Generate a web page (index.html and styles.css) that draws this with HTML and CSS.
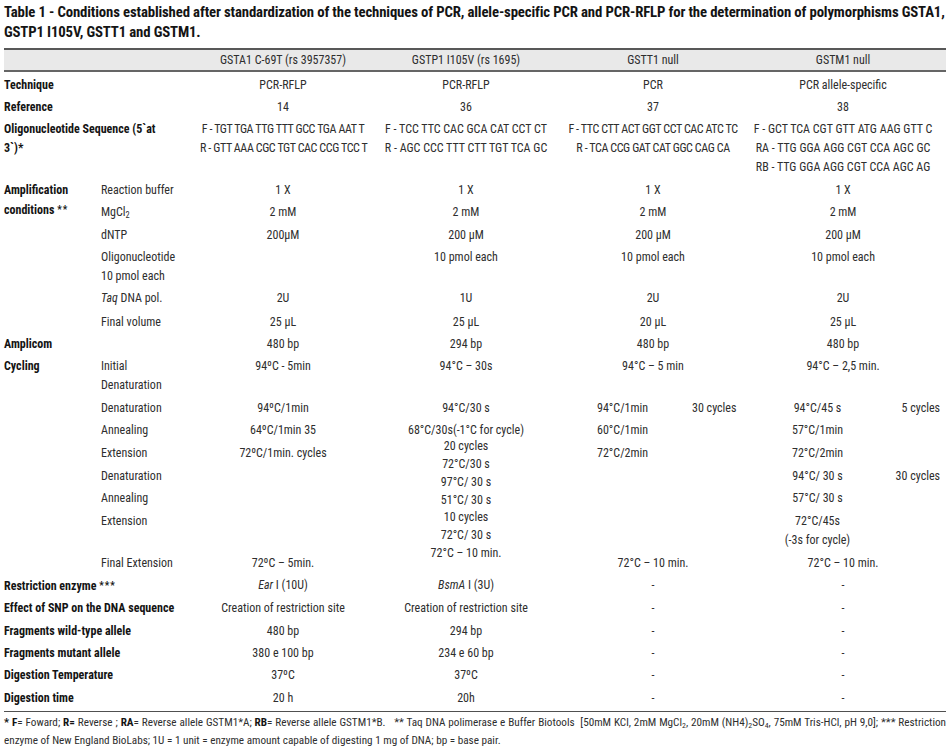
FILE: index.html
```html
<!DOCTYPE html>
<html lang="en">
<head>
<meta charset="utf-8">
<title>Table 1</title>
<link rel="stylesheet" href="styles.css">
</head>
<body>
<p class="title">Table 1 - Conditions established after standardization of the techniques of PCR, allele-specific PCR and PCR-RFLP for the determination of polymorphisms GSTA1,<br>GSTP1 I105V, GSTT1 and GSTM1.</p>
<table class="data">
  <colgroup>
    <col class="w-c1"><col class="w-c2"><col class="w-c3"><col class="w-c4">
    <col class="w-c5a"><col class="w-c5b"><col class="w-c6a"><col class="w-c6b">
  </colgroup>
  <thead>
    <tr>
      <th colspan="2"></th>
      <th>GSTA1 C-69T (rs 3957357)</th>
      <th>GSTP1 I105V (rs 1695)</th>
      <th colspan="2">GSTT1 null</th>
      <th colspan="2">GSTM1 null</th>
    </tr>
  </thead>
  <tbody>
    <tr class="first">
      <td colspan="2" class="lab">Technique</td>
      <td class="c">PCR-RFLP</td>
      <td class="c">PCR-RFLP</td>
      <td colspan="2" class="c">PCR</td>
      <td colspan="2" class="c">PCR allele-specific</td>
    </tr>
    <tr>
      <td colspan="2" class="lab">Reference</td>
      <td class="c">14</td>
      <td class="c">36</td>
      <td colspan="2" class="c">37</td>
      <td colspan="2" class="c">38</td>
    </tr>
    <tr>
      <td colspan="2" class="lab">Oligonucleotide Sequence (5`at<br>3`)*</td>
      <td class="c seq-tight">F - TGT TGA TTG TTT GCC TGA AAT T<br>R - GTT AAA CGC TGT CAC CCG TCC T</td>
      <td class="c">F - TCC TTC CAC GCA CAT CCT CT<br>R - AGC CCC TTT CTT TGT TCA GC</td>
      <td colspan="2" class="c seq-tight">F - TTC CTT ACT GGT CCT CAC ATC TC<br>R - TCA CCG GAT CAT GGC CAG CA</td>
      <td colspan="2" class="c">F - GCT TCA CGT GTT ATG AAG GTT C<br>RA - TTG GGA AGG CGT CCA AGC GC<br>RB - TTG GGA AGG CGT CCA AGC AG</td>
    </tr>
    <tr>
      <td rowspan="6" class="lab">Amplification<br>conditions <span class="ast">**</span></td>
      <td class="sub">Reaction buffer</td>
      <td class="c">1 X</td>
      <td class="c">1 X</td>
      <td colspan="2" class="c">1 X</td>
      <td colspan="2" class="c">1 X</td>
    </tr>
    <tr>
      <td class="sub">MgCl<sub>2</sub></td>
      <td class="c">2 mM</td>
      <td class="c">2 mM</td>
      <td colspan="2" class="c">2 mM</td>
      <td colspan="2" class="c">2 mM</td>
    </tr>
    <tr>
      <td class="sub">dNTP</td>
      <td class="c">200µM</td>
      <td class="c">200 µM</td>
      <td colspan="2" class="c">200 µM</td>
      <td colspan="2" class="c">200 µM</td>
    </tr>
    <tr>
      <td class="sub">Oligonucleotide<br>10 pmol each</td>
      <td class="c"></td>
      <td class="c">10 pmol each</td>
      <td colspan="2" class="c">10 pmol each</td>
      <td colspan="2" class="c">10 pmol each</td>
    </tr>
    <tr>
      <td class="sub"><i>Taq</i> DNA pol.</td>
      <td class="c">2U</td>
      <td class="c">1U</td>
      <td colspan="2" class="c">2U</td>
      <td colspan="2" class="c">2U</td>
    </tr>
    <tr class="bump">
      <td class="sub">Final volume</td>
      <td class="c">25 µL</td>
      <td class="c">25 µL</td>
      <td colspan="2" class="c">20 µL</td>
      <td colspan="2" class="c">25 µL</td>
    </tr>
    <tr>
      <td colspan="2" class="lab">Amplicom</td>
      <td class="c">480 bp</td>
      <td class="c">294 bp</td>
      <td colspan="2" class="c">480 bp</td>
      <td colspan="2" class="c">480 bp</td>
    </tr>
    <tr>
      <td rowspan="8" class="lab">Cycling</td>
      <td class="sub">Initial<br>Denaturation</td>
      <td class="c">94ºC - 5min</td>
      <td class="c">94°C – 30s</td>
      <td colspan="2" class="c">94°C – 5 min</td>
      <td colspan="2" class="c">94°C – 2,5 min.</td>
    </tr>
    <tr>
      <td class="sub">Denaturation</td>
      <td class="c">94ºC/1min</td>
      <td rowspan="7" class="c stack">
        <span class="ln">94°C/30 s</span>
        <span class="ln ln-gap">68°C/30s(-1°C for cycle)</span>
        <span class="tight">20 cycles<br>72°C/30 s<br>97°C/ 30 s<br>51°C/ 30 s<br>10 cycles<br>72°C/ 30 s<br>72°C – 10 min.</span>
      </td>
      <td class="tt">94°C/1min</td>
      <td class="tc">30 cycles</td>
      <td class="c">94°C/45 s</td>
      <td class="mc">5 cycles</td>
    </tr>
    <tr>
      <td class="sub">Annealing</td>
      <td class="c">64ºC/1min 35</td>
      <td class="tt">60°C/1min</td>
      <td class="tc"></td>
      <td class="c">57°C/1min</td>
      <td class="mc"></td>
    </tr>
    <tr>
      <td class="sub">Extension</td>
      <td class="c">72ºC/1min. cycles</td>
      <td class="tt">72°C/2min</td>
      <td class="tc"></td>
      <td class="c">72°C/2min</td>
      <td class="mc"></td>
    </tr>
    <tr class="bump">
      <td class="sub">Denaturation</td>
      <td class="c"></td>
      <td class="tt"></td>
      <td class="tc"></td>
      <td class="c">94°C/ 30 s</td>
      <td class="mc">30 cycles</td>
    </tr>
    <tr>
      <td class="sub">Annealing</td>
      <td class="c"></td>
      <td class="tt"></td>
      <td class="tc"></td>
      <td class="c">57°C/ 30 s</td>
      <td class="mc"></td>
    </tr>
    <tr>
      <td class="sub">Extension</td>
      <td class="c"></td>
      <td class="tt"></td>
      <td class="tc"></td>
      <td class="c">72°C/45s<br>(-3s for cycle)</td>
      <td class="mc"></td>
    </tr>
    <tr class="bump-lg">
      <td class="sub">Final Extension</td>
      <td class="c">72ºC – 5min.</td>
      <td colspan="2" class="c">72°C – 10 min.</td>
      <td colspan="2" class="c">72°C – 10 min.</td>
    </tr>
    <tr>
      <td colspan="2" class="lab">Restriction enzyme <span class="ast">***</span></td>
      <td class="c"><i>Ear</i> I (10U)</td>
      <td class="c"><i>BsmA</i> I (3U)</td>
      <td colspan="2" class="c">-</td>
      <td colspan="2" class="c">-</td>
    </tr>
    <tr>
      <td colspan="2" class="lab">Effect of SNP on the DNA sequence</td>
      <td class="c">Creation of restriction site</td>
      <td class="c">Creation of restriction site</td>
      <td colspan="2" class="c">-</td>
      <td colspan="2" class="c">-</td>
    </tr>
    <tr>
      <td colspan="2" class="lab">Fragments wild-type allele</td>
      <td class="c">480 bp</td>
      <td class="c">294 bp</td>
      <td colspan="2" class="c">-</td>
      <td colspan="2" class="c">-</td>
    </tr>
    <tr>
      <td colspan="2" class="lab">Fragments mutant allele</td>
      <td class="c">380 e 100 bp</td>
      <td class="c">234 e 60 bp</td>
      <td colspan="2" class="c">-</td>
      <td colspan="2" class="c">-</td>
    </tr>
    <tr>
      <td colspan="2" class="lab">Digestion Temperature</td>
      <td class="c">37ºC</td>
      <td class="c">37ºC</td>
      <td colspan="2" class="c">-</td>
      <td colspan="2" class="c">-</td>
    </tr>
    <tr class="last">
      <td colspan="2" class="lab">Digestion time</td>
      <td class="c">20 h</td>
      <td class="c">20h</td>
      <td colspan="2" class="c">-</td>
      <td colspan="2" class="c">-</td>
    </tr>
  </tbody>
</table>
<div class="notes">
  <span class="note-line"><b>*</b> <b>F</b>= Foward; <b>R=</b> Reverse ; <b>RA</b>= Reverse allele GSTM1*A; <b>RB</b>= Reverse allele GSTM1*B. &nbsp;&nbsp;** Taq DNA polimerase e Buffer Biotools &nbsp;[50mM KCl, 2mM MgCl<sub>2</sub>, 20mM (NH4)<sub>2</sub>SO<sub>4</sub>, 75mM Tris-HCl, pH 9,0]; *** Restriction</span>
  <span class="note-line2">enzyme of New England BioLabs; 1U = 1 unit = enzyme amount capable of digesting 1 mg of DNA; bp = base pair.</span>
</div>
</body>
</html>
```

FILE: styles.css
```css
html, body {
  background: #ffffff;
}

body {
  margin: 0;
  padding: 2px 4px 0;
  font-family: "Roboto Condensed", Roboto, "Liberation Sans", sans-serif;
  font-stretch: condensed;
  color: #2e2e2e;
}

.title {
  margin: 0 0 6px;
  font-size: 14.8px;
  letter-spacing: -0.15px;
  line-height: 20px;
  font-weight: bold;
  color: #141414;
  white-space: nowrap;
}

.data {
  width: 942px;
  table-layout: fixed;
  border-collapse: collapse;
  font-size: 12px;
}

.w-c1 { width: 97px; }
.w-c2 { width: 99px; }
.w-c3 { width: 166px; }
.w-c4 { width: 200px; }
.w-c5a { width: 114px; }
.w-c5b { width: 60px; }
.w-c6a { width: 155px; }
.w-c6b { width: 51px; }

.data thead tr {
  background: #e9e9e9;
  border-top: 2px solid #585858;
  border-bottom: 2px solid #656565;
}

.data th {
  height: 20px;
  padding: 0;
  font-weight: normal;
  line-height: 19px;
  text-align: center;
  white-space: nowrap;
}

.data td {
  padding: 1.7px 0;
  line-height: 19px;
  vertical-align: top;
  white-space: nowrap;
}

.data tr.first td {
  padding-top: 3.7px;
}

.data tr.bump td {
  padding-top: 2.7px;
}

.data tr.bump-lg td {
  padding-top: 2.2px;
}

.data tr.last td {
  padding-bottom: 3px;
}

.data tbody tr.last {
  border-bottom: 1px solid #505050;
}

.lab {
  font-weight: bold;
  color: #141414;
}

.ast {
  font-size: 10px;
  letter-spacing: 1px;
  vertical-align: 1px;
}

.c {
  text-align: center;
}

.seq-tight {
  letter-spacing: -0.4px;
}

.data td.tt {
  padding-left: 31px;
  text-align: left;
}

.data td.tc {
  padding-left: 12px;
  text-align: left;
}

.data td.mc {
  padding-right: 6px;
  text-align: right;
}

.stack .ln {
  display: block;
}

.stack .ln-gap {
  margin-top: 3.4px;
}

.stack .tight {
  display: block;
  margin-top: -2px;
  line-height: 17.8px;
}

sub {
  font-size: 70%;
  line-height: 0;
  vertical-align: -2px;
}

.notes {
  margin-top: 2px;
  font-size: 11.2px;
  line-height: 18px;
  color: #2e2e2e;
}

.notes b {
  color: #141414;
}

.note-line {
  display: block;
  text-align: justify;
  text-align-last: justify;
  white-space: nowrap;
}

.note-line2 {
  display: block;
}
```
